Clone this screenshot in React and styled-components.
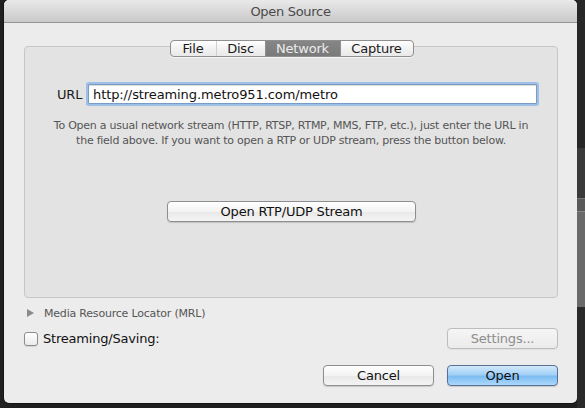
import React from 'react';
import styled, { createGlobalStyle } from 'styled-components';

const Global = createGlobalStyle`
html, body {
  margin: 0;
  padding: 0;
  background: #232323;
}
body {
  font-family: "DejaVu Sans", "Noto Sans", sans-serif;
  -webkit-font-smoothing: antialiased;
}
`;

const Desktop = styled.div`
width: 585px;
height: 408px;
display: flex;
overflow: hidden;
background: #1f1f1f;
`;

const LeftEdge = styled.div`
width: 4px;
flex: none;
background: #202020;
`;

const RightEdge = styled.div`
flex: 1;
display: flex;
flex-direction: column;
`;

const EdgeBlock = styled.div`
height: ${p => p.h}px;
flex: ${p => (p.h ? 'none' : 1)};
background: ${p => p.bg};
border-bottom: ${p => (p.line ? `1px solid ${p.line}` : 'none')};
`;

const Dialog = styled.div`
width: 573px;
height: 403px;
flex: none;
display: flex;
flex-direction: column;
background: #ececec;
border-radius: 5px;
overflow: hidden;
box-shadow: 0 0 0 1px rgba(0, 0, 0, 0.35);
`;

const TitleBar = styled.div`
height: 22px;
flex: none;
display: flex;
align-items: center;
justify-content: center;
background: linear-gradient(#e9e9e9, #c9c9c9);
border-bottom: 1px solid #959595;
color: #4a4a4a;
font-size: 13px;
letter-spacing: -0.3px;
`;

const Body = styled.div`
flex: 1;
display: flex;
flex-direction: column;
padding: 23px 19px 0 20px;
`;

const GroupBox = styled.div`
height: 250px;
flex: none;
display: flex;
flex-direction: column;
align-items: center;
background: #e3e3e3;
border: 1px solid #c6c6c6;
border-radius: 4px;
`;

const Tabs = styled.div`
margin-top: -7px;
margin-left: 1px;
height: 15px;
display: flex;
border: 1px solid #8f8f8f;
border-radius: 4px;
overflow: hidden;
background: linear-gradient(#ffffff, #f2f2f2 50%, #e9e9e9);
box-shadow: 0 1px 0 rgba(255, 255, 255, 0.6);
`;

const Tab = styled.div`
width: ${p => p.w}px;
display: flex;
align-items: center;
justify-content: center;
font-size: 13px;
letter-spacing: -0.2px;
color: ${p => (p.active ? '#ececec' : '#1a1a1a')};
background: ${p => (p.active ? 'linear-gradient(#868686, #7a7a7a)' : 'transparent')};
border-left: ${p => (p.first ? 'none' : p.soft ? '1px solid #d0d0d0' : '1px solid #8f8f8f')};
`;

const UrlRow = styled.div`
margin-top: 27px;
width: 100%;
display: flex;
align-items: center;
padding-left: 32px;
box-sizing: border-box;
`;

const Label = styled.span`
font-size: 13px;
color: #1a1a1a;
width: 31px;
letter-spacing: -0.2px;
`;

const UrlField = styled.div`
width: 443px;
height: 18px;
display: flex;
align-items: center;
padding-left: 4px;
background: #ffffff;
border: 1px solid #7a9cc4;
box-shadow: 0 0 0 2px #9cc0e8, inset 0 1px 1px rgba(0, 0, 0, 0.15);
border-radius: 1px;
font-size: 13px;
color: #111;
letter-spacing: -0.1px;
`;

const Help = styled.p`
margin: 14px 0 0;
width: 520px;
text-align: center;
font-size: 11px;
line-height: 15px;
color: #555;
letter-spacing: -0.25px;
`;

const Button = styled.div`
width: ${p => p.w}px;
height: 21px;
display: flex;
align-items: center;
justify-content: center;
border-radius: 4px;
font-size: 13px;
letter-spacing: -0.2px;
color: ${p => (p.disabled ? '#8c8c8c' : '#111')};
border: 1px solid ${p => (p.primary ? '#5a6f96' : p.disabled ? '#bdbdbd' : '#8e8e8e')};
background: ${p =>
  p.primary
    ? 'linear-gradient(#d3e9fc, #a2d0f6 45%, #7dbcf1 55%, #acd8fc)'
    : p.disabled
      ? 'linear-gradient(#f5f5f5, #ebebeb)'
      : 'linear-gradient(#ffffff, #f3f3f3 50%, #e9e9e9 55%, #f4f4f4)'};
box-shadow: 0 1px 1px rgba(0, 0, 0, ${p => (p.disabled ? 0.05 : 0.15)});
box-sizing: border-box;
`;

const StreamButton = styled(Button)`
margin-top: 53px;
margin-left: 1px;
`;

const Disclosure = styled.div`
margin-top: 8px;
height: 14px;
display: flex;
align-items: center;
gap: 10px;
padding-left: 3px;
font-size: 11px;
color: #555;
letter-spacing: -0.2px;
`;

const Triangle = styled.span`
width: 0;
height: 0;
border-top: 4px solid transparent;
border-bottom: 4px solid transparent;
border-left: 7px solid #8a8a8a;
`;

const OptionRow = styled.div`
margin-top: 8px;
height: 21px;
display: flex;
align-items: center;
justify-content: space-between;
`;

const Check = styled.label`
display: flex;
align-items: center;
gap: 5px;
font-size: 13px;
color: #111;
letter-spacing: -0.2px;
`;

const Box = styled.span`
width: 12px;
height: 12px;
border: 1px solid #8c8c8c;
border-radius: 3px;
background: linear-gradient(#ffffff, #ebebeb);
box-shadow: 0 1px 1px rgba(0, 0, 0, 0.1);
`;

const Footer = styled.div`
margin-top: 16px;
display: flex;
justify-content: flex-end;
gap: 13px;
`;

export default function App() {
  return (
    <>
      <Global />
      <Desktop>
        <LeftEdge />
        <Dialog>
          <TitleBar>Open Source</TitleBar>
          <Body>
            <GroupBox>
              <Tabs>
                <Tab w={45} first>File</Tab>
                <Tab w={48} soft>Disc</Tab>
                <Tab w={74} active>Network</Tab>
                <Tab w={72}>Capture</Tab>
              </Tabs>
              <UrlRow>
                <Label>URL</Label>
                <UrlField>http://streaming.metro951.com/metro</UrlField>
              </UrlRow>
              <Help>
                To Open a usual network stream (HTTP, RTSP, RTMP, MMS, FTP, etc.), just enter the URL in
                <br />
                the field above. If you want to open a RTP or UDP stream, press the button below.
              </Help>
              <StreamButton w={249}>Open RTP/UDP Stream</StreamButton>
            </GroupBox>
            <Disclosure>
              <Triangle />
              Media Resource Locator (MRL)
            </Disclosure>
            <OptionRow>
              <Check>
                <Box />
                Streaming/Saving:
              </Check>
              <Button w={111} disabled>Settings...</Button>
            </OptionRow>
            <Footer>
              <Button w={111}>Cancel</Button>
              <Button w={111} primary>Open</Button>
            </Footer>
          </Body>
        </Dialog>
        <RightEdge>
          <EdgeBlock h={148} bg="#272727" />
          <EdgeBlock h={50} bg="#3a3a3a" line="#777" />
          <EdgeBlock h={12} bg="#5a5a5a" line="#888" />
          <EdgeBlock h={95} bg="#6a6a6a" />
          <EdgeBlock bg="#2a2a2a" />
        </RightEdge>
      </Desktop>
    </>
  );
}
